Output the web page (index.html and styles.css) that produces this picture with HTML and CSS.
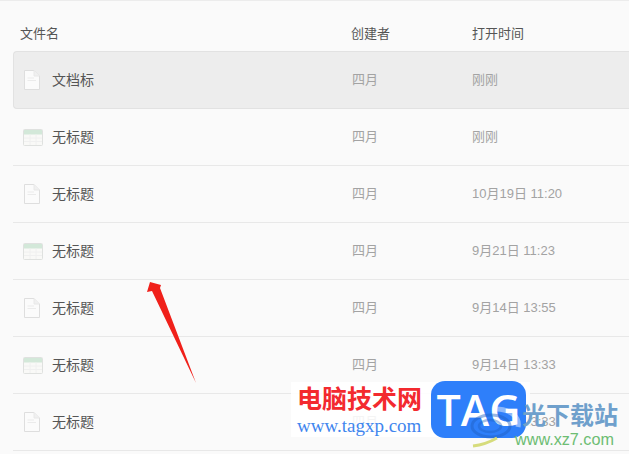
FILE: index.html
```html
<!DOCTYPE html>
<html lang="zh-CN">
<head>
    <meta charset="UTF-8">
    <title>最近文件</title>
    <link rel="stylesheet" href="styles.css">
</head>
<body>
    <svg class="defs" width="0" height="0">
        <symbol id="docIcon" viewBox="0 0 18 20">
            <path d="M1.5 0.5H11L16.5 6V19.5H1.5Z" fill="#fbfbfb" stroke="#dedede"/>
            <path d="M11 0.5V6H16.5" fill="#f0f0f0" stroke="#e8e8e8"/>
            <path d="M4.5 8H11M4.5 10.5H13" stroke="#ebebeb" stroke-width="1.2" fill="none"/>
        </symbol>
        <symbol id="sheetIcon" viewBox="0 0 20 17">
            <rect x="0.5" y="0.5" width="19" height="16" rx="1" fill="#f9f9f7" stroke="#dfe1df"/>
            <rect x="1" y="1" width="18" height="4.5" fill="#d3e8d9"/>
            <path d="M1 9H19M1 12.5H19M7 5.5V16M13 5.5V16" stroke="#f0f0f0" fill="none"/>
        </symbol>
    </svg>

    <div class="page">
        <div class="file-head">
            <div>文件名</div>
            <div>创建者</div>
            <div>打开时间</div>
        </div>

        <div class="file-row selected">
            <div class="file-name"><svg class="icon doc"><use href="#docIcon"/></svg>文档标</div>
            <div class="cell">四月</div>
            <div class="cell">刚刚</div>
        </div>
        <div class="file-row">
            <div class="file-name"><svg class="icon sheet"><use href="#sheetIcon"/></svg>无标题</div>
            <div class="cell">四月</div>
            <div class="cell">刚刚</div>
        </div>
        <div class="file-row">
            <div class="file-name"><svg class="icon doc"><use href="#docIcon"/></svg>无标题</div>
            <div class="cell">四月</div>
            <div class="cell">10月19日 11:20</div>
        </div>
        <div class="file-row">
            <div class="file-name"><svg class="icon sheet"><use href="#sheetIcon"/></svg>无标题</div>
            <div class="cell">四月</div>
            <div class="cell">9月21日 11:23</div>
        </div>
        <div class="file-row">
            <div class="file-name"><svg class="icon doc"><use href="#docIcon"/></svg>无标题</div>
            <div class="cell">四月</div>
            <div class="cell">9月14日 13:55</div>
        </div>
        <div class="file-row">
            <div class="file-name"><svg class="icon sheet"><use href="#sheetIcon"/></svg>无标题</div>
            <div class="cell">四月</div>
            <div class="cell">9月14日 13:33</div>
        </div>
        <div class="file-row">
            <div class="file-name"><svg class="icon doc"><use href="#docIcon"/></svg>无标题</div>
            <div class="cell">四月</div>
            <div class="cell">9月14日 13:33</div>
        </div>

        <!-- 红色箭头 -->
        <svg class="arrow" width="60" height="110" viewBox="0 0 60 110">
            <polygon points="5,1 16,4 15,7 51,102 7,10 2,11" fill="#f0201a"/>
        </svg>

        <!-- 水印 -->
        <div class="mark-left">
            <div class="mark-title">电脑技术网</div>
            <div class="mark-site">www.tagxp.com</div>
        </div>
        <div class="mark-tag">TAG</div>
        <div class="mark-right">
            <svg class="swirl" width="60" height="45" viewBox="0 0 60 45">
                <path d="M30 4C44 4 54 12 52 22" fill="none" stroke="#ffffff" stroke-opacity="0.45" stroke-width="5"/>
                <ellipse cx="25" cy="21" rx="19" ry="11" fill="none" stroke="#1f5fc0" stroke-opacity="0.45" stroke-width="3"/>
                <ellipse cx="24" cy="21" rx="11" ry="6" fill="none" stroke="#1f5fc0" stroke-opacity="0.4" stroke-width="2.5"/>
                <path d="M7 41C16 40 24 37 31 33" fill="none" stroke="#d6dc7c" stroke-width="3"/>
            </svg>
            <div class="mark-cn">光下载站</div>
            <div class="mark-url">www.xz7.com</div>
        </div>
    </div>
</body>
</html>
```

FILE: styles.css
```css
* {
    box-sizing: border-box;
    margin: 0;
    padding: 0;
}

html, body {
    height: 100%;
    overflow: hidden;
}

body {
    font-family: "Liberation Sans", "Noto Sans CJK SC", sans-serif;
    font-size: 13px;
    background: #fafafa;
    color: #555;
}

.defs {
    display: block;
    height: 0;
}

.page {
    position: relative;
    height: 454px;
    border-top: 1px solid #ececec;
}

.file-head {
    display: grid;
    grid-template-columns: 331px 121px 1fr;
    align-items: center;
    height: 50px;
    padding: 13px 0 0 20px;
    color: #555;
}

.file-row {
    display: grid;
    grid-template-columns: 339px 120px 1fr;
    align-items: center;
    height: 57px;
    margin-left: 13px;
    padding-bottom: 3px;
    border-bottom: 1px solid #e8e8e8;
}

.file-row.selected {
    grid-template-columns: 338px 120px 1fr;
    height: 58px;
    background: #ededed;
    border: 1px solid #e2e2e2;
    border-right: none;
    border-radius: 4px 0 0 4px;
}

.file-name {
    display: flex;
    align-items: center;
    padding-left: 10px;
    color: #555;
    font-size: 14px;
}

.file-row.selected .file-name {
    padding-left: 9px;
}

.icon {
    flex: none;
    margin-top: 3px;
}

.icon.doc {
    width: 18px;
    height: 20px;
    margin-right: 11px;
}

.icon.sheet {
    width: 20px;
    height: 17px;
    margin-right: 9px;
}

.cell {
    color: #a3a3a3;
}

.arrow {
    position: absolute;
    left: 145px;
    top: 280px;
}

.mark-left {
    position: absolute;
    left: 291px;
    top: 381px;
    width: 239px;
    height: 55px;
    padding: 4px 0 0 6px;
    background: rgba(255, 255, 255, 0.88);
}

.mark-title {
    color: #f32a2f;
    font-size: 25px;
    font-weight: 700;
    line-height: 26px;
}

.mark-site {
    margin-top: 4px;
    color: #3f86ee;
    font-family: "Liberation Serif", serif;
    font-size: 19px;
    line-height: 20px;
}

.mark-tag {
    position: absolute;
    left: 431px;
    top: 380px;
    width: 95px;
    height: 57px;
    border-radius: 14px;
    background: #2e7ffa;
    color: #fff;
    font-family: "Open Sans", sans-serif;
    font-size: 43px;
    font-weight: 600;
    line-height: 57px;
    text-align: center;
}

.mark-right {
    position: absolute;
    left: 466px;
    top: 402px;
    width: 163px;
    height: 50px;
}

.swirl {
    position: absolute;
    left: 0;
    top: 2px;
}

.mark-cn {
    position: absolute;
    left: 56px;
    top: 0;
    color: #6fa0cc;
    font-size: 24px;
    font-weight: 700;
    line-height: 26px;
    white-space: nowrap;
}

.mark-url {
    position: absolute;
    left: 49px;
    top: 26px;
    color: #6dbd73;
    font-size: 16.2px;
    line-height: 20px;
    white-space: nowrap;
}
```
